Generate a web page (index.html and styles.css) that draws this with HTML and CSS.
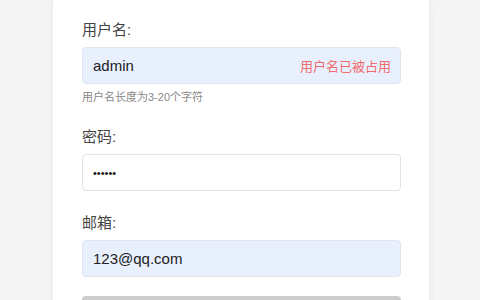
FILE: index.html
```html
<!DOCTYPE html>
<html lang="zh">
<head>
<meta charset="utf-8">
<link rel="stylesheet" href="styles.css">
</head>
<body>
<div class="page">
  <form class="card">
    <div class="group">
      <label class="label">用户名:</label>
      <div class="field autofill">
        <span class="value">admin</span>
        <span class="error">用户名已被占用</span>
      </div>
      <div class="hint">用户名长度为3-20个字符</div>
    </div>
    <div class="group">
      <label class="label">密码:</label>
      <div class="field">
        <span class="value dots">••••••</span>
      </div>
    </div>
    <div class="group last">
      <label class="label">邮箱:</label>
      <div class="field autofill">
        <span class="value">123@qq.com</span>
      </div>
    </div>
    <div class="button"></div>
  </form>
</div>
</body>
</html>
```
FILE: styles.css
```css
html, body {
  margin: 0;
  padding: 0;
  background: #f5f5f5;
  height: 300px;
  overflow: hidden;
  font-family: "Liberation Sans", Arial, "Noto Sans CJK SC", sans-serif;
}
.page {
  display: flex;
  padding-left: 53px;
}
.card {
  width: 376px;
  box-sizing: border-box;
  background: #fff;
  padding: 19px 28px 40px 29px;
  box-shadow: 0 0 8px rgba(0,0,0,0.06);
  display: flex;
  flex-direction: column;
}
.group {
  display: flex;
  flex-direction: column;
  margin-bottom: 21px;
}
.group.last {
  margin-bottom: 19px;
}
.label {
  font-size: 15px;
  line-height: 22px;
  color: #444;
  margin-bottom: 6px;
}
.field {
  height: 37px;
  box-sizing: border-box;
  border: 1px solid #e2e2e2;
  border-radius: 4px;
  background: #fff;
  display: flex;
  align-items: center;
  justify-content: space-between;
  padding: 0 9px 0 10px;
}
.field.autofill {
  background: #e8f0fe;
  border-color: #dfe4ee;
}
.value {
  font-size: 15px;
  color: #222;
}
.dots {
  font-size: 11px;
  color: #111;
}
.error {
  font-size: 13px;
  color: #f26b6b;
}
.hint {
  margin-top: 6px;
  font-size: 11px;
  line-height: 15px;
  color: #888;
}
.button {
  height: 38px;
  background: #cccccc;
  border-radius: 4px;
}
```
